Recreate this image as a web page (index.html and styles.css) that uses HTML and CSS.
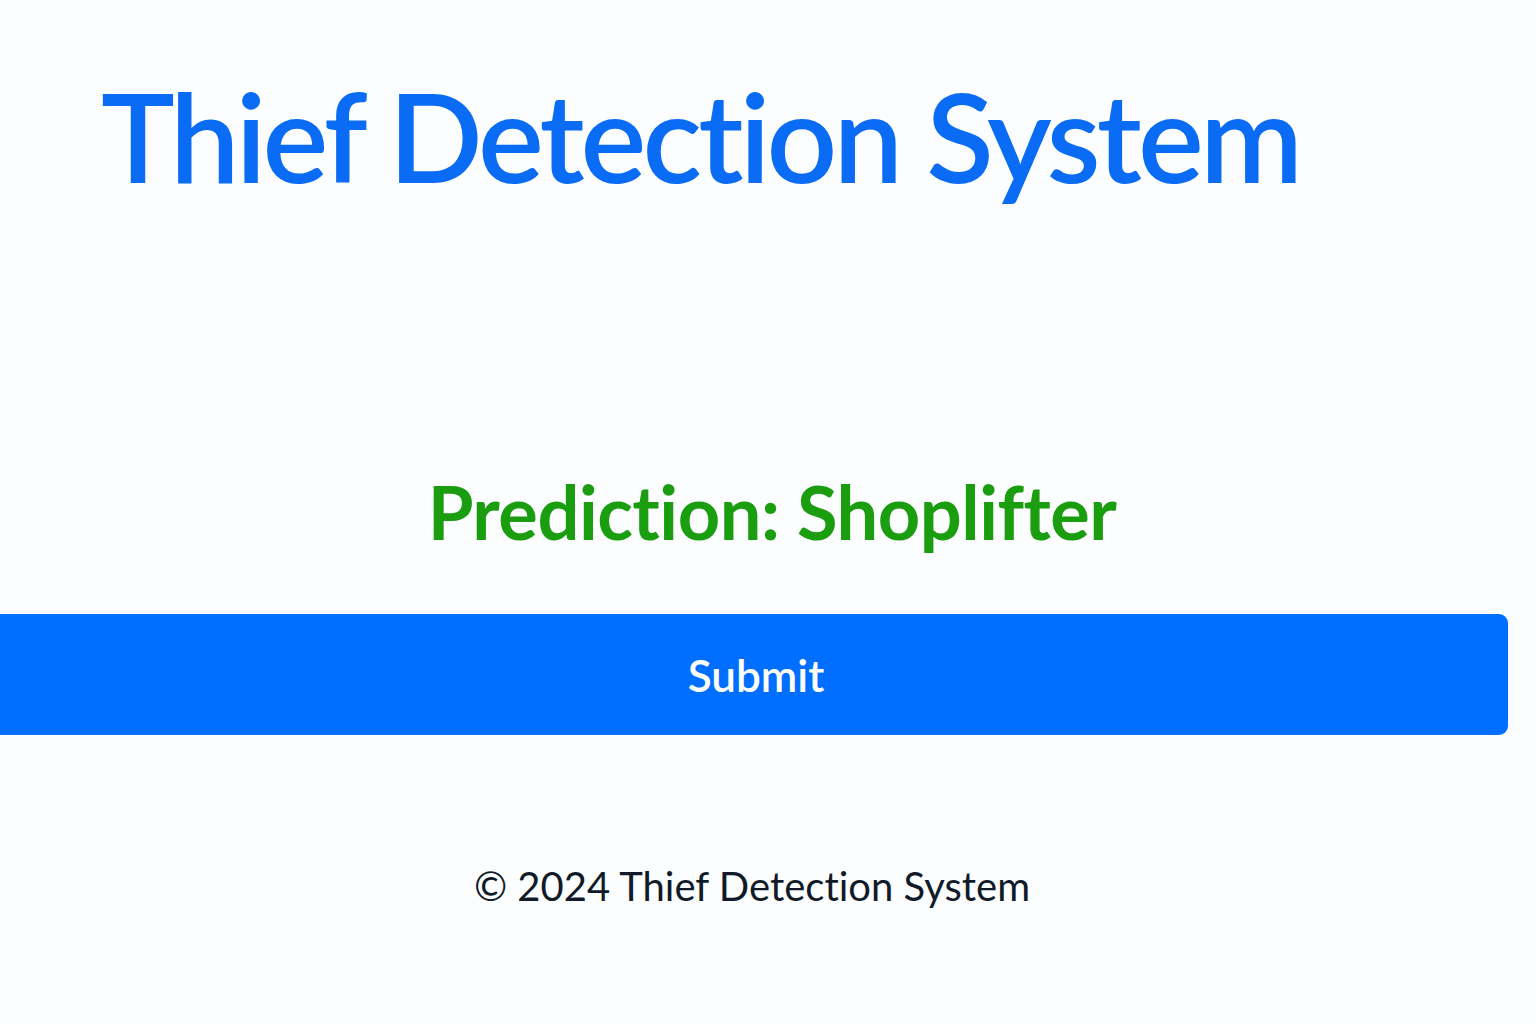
FILE: index.html
```html
<!DOCTYPE html>
<html lang="en">
<head>
<meta charset="utf-8">
<title>Thief Detection System</title>
<link rel="stylesheet" href="styles.css">
</head>
<body>
<div class="page">
  <header class="header">
    <h1 class="title">Thief Detection System</h1>
  </header>
  <main class="main">
    <h2 class="prediction">Prediction: Shoplifter</h2>
    <button class="submit" type="button">Submit</button>
  </main>
  <footer class="footer">
    <p class="copy">© 2024 Thief Detection System</p>
  </footer>
</div>
</body>
</html>
```

FILE: styles.css
```css
html, body {
  margin: 0;
  padding: 0;
  background: #fbfdff;
}
body {
  font-family: Lato, "Noto Sans", sans-serif;
  font-variant-ligatures: none;
  width: 1536px;
  height: 1024px;
  overflow: hidden;
}
.page {
  display: flex;
  flex-direction: column;
}
.header {
  padding: 60px 0 0 101px;
}
.title {
  margin: 0;
  font-size: 124px;
  line-height: 150px;
  font-weight: 600;
  letter-spacing: -3.85px;
  color: #0a6cf5;
}
.main {
  display: flex;
  flex-direction: column;
  align-items: stretch;
  padding-top: 257px;
}
.prediction {
  margin: 0;
  text-align: center;
  font-size: 74px;
  line-height: 90px;
  font-weight: 700;
  letter-spacing: -0.5px;
  color: #1a9e10;
  padding-left: 8px;
}
.submit {
  margin-top: 57px;
  width: 1508px;
  height: 121px;
  border: none;
  border-radius: 0 9px 9px 0;
  background: #006fff;
  color: #ffffff;
  font-family: Lato, "Noto Sans", sans-serif;
  font-variant-ligatures: none;
  font-size: 44px;
  font-weight: 600;
  padding: 0 0 0 4px;
}
.footer {
  display: flex;
  justify-content: center;
  padding-top: 127px;
  padding-right: 32px;
}
.copy {
  margin: 0;
  font-size: 40px;
  color: #111a28;
}
```
